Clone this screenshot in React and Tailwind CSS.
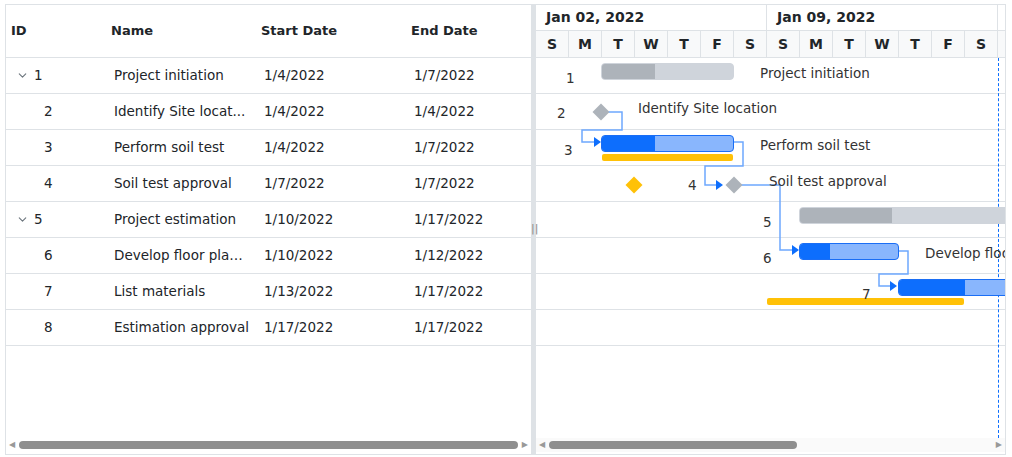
import React from "react";
import { ChevronDown } from "lucide-react";

const rows = [
  { id: 1, name: "Project initiation", start: "1/4/2022", end: "1/7/2022", parent: true },
  { id: 2, name: "Identify Site locat...", start: "1/4/2022", end: "1/4/2022" },
  { id: 3, name: "Perform soil test", start: "1/4/2022", end: "1/7/2022" },
  { id: 4, name: "Soil test approval", start: "1/7/2022", end: "1/7/2022" },
  { id: 5, name: "Project estimation", start: "1/10/2022", end: "1/17/2022", parent: true },
  { id: 6, name: "Develop floor plan ...", start: "1/10/2022", end: "1/12/2022" },
  { id: 7, name: "List materials", start: "1/13/2022", end: "1/17/2022" },
  { id: 8, name: "Estimation approval", start: "1/17/2022", end: "1/17/2022" },
];

const days = ["S", "M", "T", "W", "T", "F", "S", "S", "M", "T", "W", "T", "F", "S"];
const font = { fontFamily: '"Comic Sans MS", "DejaVu Sans", sans-serif' };

const Bar = ({ x, y, w, p, parent }) => (
  <div
    className={`absolute h-[17px] rounded-[4px] overflow-hidden border ${parent ? "bg-[#cfd4db] border-[#cfd4db]" : "bg-[#89b6fd] border-[#1a6ef5]"}`}
    style={{ left: x, top: y, width: w }}
  >
    <div className={`h-full ${parent ? "bg-[#adb3ba]" : "bg-[#0d6efd]"}`} style={{ width: p }} />
  </div>
);

const Label = ({ x, y, children, cls = "" }) => (
  <div className={`absolute text-[13.5px] text-[#333] whitespace-nowrap ${cls}`} style={{ left: x, top: y }}>
    {children}
  </div>
);

const Diamond = ({ x, y, color }) => (
  <div className={`absolute w-[12px] h-[12px] rotate-45 ${color}`} style={{ left: x - 6, top: y - 6 }} />
);

export default function App() {
  return (
    <div className="w-[1012px] h-[457px] bg-white pt-[4px] pl-[5px]" style={font}>
      <div className="w-[1001px] h-[451px] border border-[#dee2e6] flex overflow-hidden">
        {/* grid */}
        <div className="w-[525px] flex flex-col text-[13.5px] text-[#212529]">
          <div className="h-[53px] flex items-center font-bold border-b border-[#dee2e6] text-[13px]">
            <div className="w-[100px] pl-[5px]">ID</div>
            <div className="w-[150px] pl-[5px]">Name</div>
            <div className="w-[150px] pl-[5px]">Start Date</div>
            <div className="w-[120px] pl-[5px]">End Date</div>
          </div>
          {rows.map((r) => (
            <div key={r.id} className="h-[36px] flex items-center border-b border-[#dee2e6]">
              <div className="w-[100px] flex items-center pl-[10px]">
                {r.parent ? (
                  <>
                    <ChevronDown className="w-[13px] h-[13px] text-[#6c757d]" />
                    <span className="ml-[5px]">{r.id}</span>
                  </>
                ) : (
                  <span className="ml-[28px]">{r.id}</span>
                )}
              </div>
              <div className="w-[150px] pl-[8px] pr-[6px] truncate">{r.name}</div>
              <div className="w-[150px] pl-[8px]">{r.start}</div>
              <div className="w-[120px] pl-[8px]">{r.end}</div>
            </div>
          ))}
          <div className="flex-1" />
          <div className="h-[14px] flex items-center px-[3px] gap-[4px] mb-[2px]">
            <span className="text-[8px] text-[#999]">◀</span>
            <div className="flex-1 h-[8px] rounded-full bg-[#8f8f8f]" />
            <span className="text-[8px] text-[#999]">▶</span>
          </div>
        </div>
        {/* splitter */}
        <div className="w-[5px] bg-[#dee2e6] flex flex-col">
          <div className="h-[218px]" />
          <div className="text-[11px] text-[#888] leading-none">||</div>
        </div>
        {/* chart */}
        <div className="flex-1 flex flex-col relative">
          <div className="h-[53px] border-b border-[#dee2e6] flex flex-col">
            <div className="h-[26px] flex font-bold text-[14px] text-[#212529] border-b border-[#dee2e6]">
              <div className="w-[231px] pl-[10px] flex items-center border-r border-[#dee2e6]">Jan 02, 2022</div>
              <div className="w-[231px] pl-[10px] flex items-center border-r border-[#dee2e6]">Jan 09, 2022</div>
            </div>
            <div className="flex-1 flex bg-[#f8f9fa] font-bold text-[14px] text-[#212529]">
              {days.map((d, i) => (
                <div key={i} className="w-[33px] shrink-0 flex items-center justify-center border-r border-[#dee2e6]">
                  {d}
                </div>
              ))}
            </div>
          </div>
          <div className="relative flex-1 overflow-hidden">
            {rows.map((r) => (
              <div key={r.id} className="h-[36px] border-b border-[#dee2e6]" />
            ))}
            <div className="absolute left-[462px] top-0 bottom-[16px] border-l border-dashed border-[#0d6efd]" />
            <svg className="absolute left-0 top-0" width="470" height="300">
              <g fill="none" stroke="#6ea8fe" strokeWidth="1.5">
                <path d="M71 54 H86 V72 H46 V84 H58" />
                <path d="M198 84 H207 V108 H169 V127 H180" />
                <path d="M203 127 H244 V192 H256" />
                <path d="M363 193 H372 V216 H343 V228 H354" />
              </g>
              <g fill="#0d6efd">
                <path d="M58 79 L65 84 L58 89 Z" />
                <path d="M180 122 L187 127 L180 132 Z" />
                <path d="M256 187 L263 192 L256 197 Z" />
                <path d="M354 223 L361 228 L354 233 Z" />
              </g>
            </svg>
            <Bar x={65} y={5} w={133} p={53} parent />
            <Label x={30} y={10}>1</Label>
            <Label x={224} y={5}>Project initiation</Label>
            <Diamond x={65} y={54} color="bg-[#adb3ba]" />
            <Label x={21} y={45}>2</Label>
            <Label x={102} y={40}>Identify Site location</Label>
            <Bar x={65} y={77} w={133} p={53} />
            <div className="absolute left-[66px] top-[96px] w-[131px] h-[7px] rounded-[2px] bg-[#ffc107]" />
            <Label x={28} y={82}>3</Label>
            <Label x={224} y={77}>Perform soil test</Label>
            <Diamond x={98} y={127} color="bg-[#ffc107]" />
            <Label x={152} y={117}>4</Label>
            <Diamond x={198} y={127} color="bg-[#adb3ba]" />
            <Label x={233} y={113}>Soil test approval</Label>
            <Bar x={263} y={149} w={210} p={92} parent />
            <Label x={227} y={154}>5</Label>
            <Bar x={263} y={185} w={100} p={30} />
            <Label x={227} y={190}>6</Label>
            <Label x={389} y={185}>Develop floor plan for estimation</Label>
            <Bar x={362} y={221} w={115} p={66} />
            <div className="absolute left-[231px] top-[240px] w-[197px] h-[7px] rounded-[2px] bg-[#ffc107]" />
            <Label x={326} y={226}>7</Label>
            <div className="absolute left-0 right-0 bottom-[2px] h-[14px] flex items-center px-[3px] gap-[4px] bg-[#fafafa]">
              <span className="text-[8px] text-[#999]">◀</span>
              <div className="w-[248px] h-[8px] rounded-full bg-[#8f8f8f]" />
              <div className="flex-1" />
              <span className="text-[8px] text-[#999]">▶</span>
            </div>
          </div>
        </div>
      </div>
    </div>
  );
}
